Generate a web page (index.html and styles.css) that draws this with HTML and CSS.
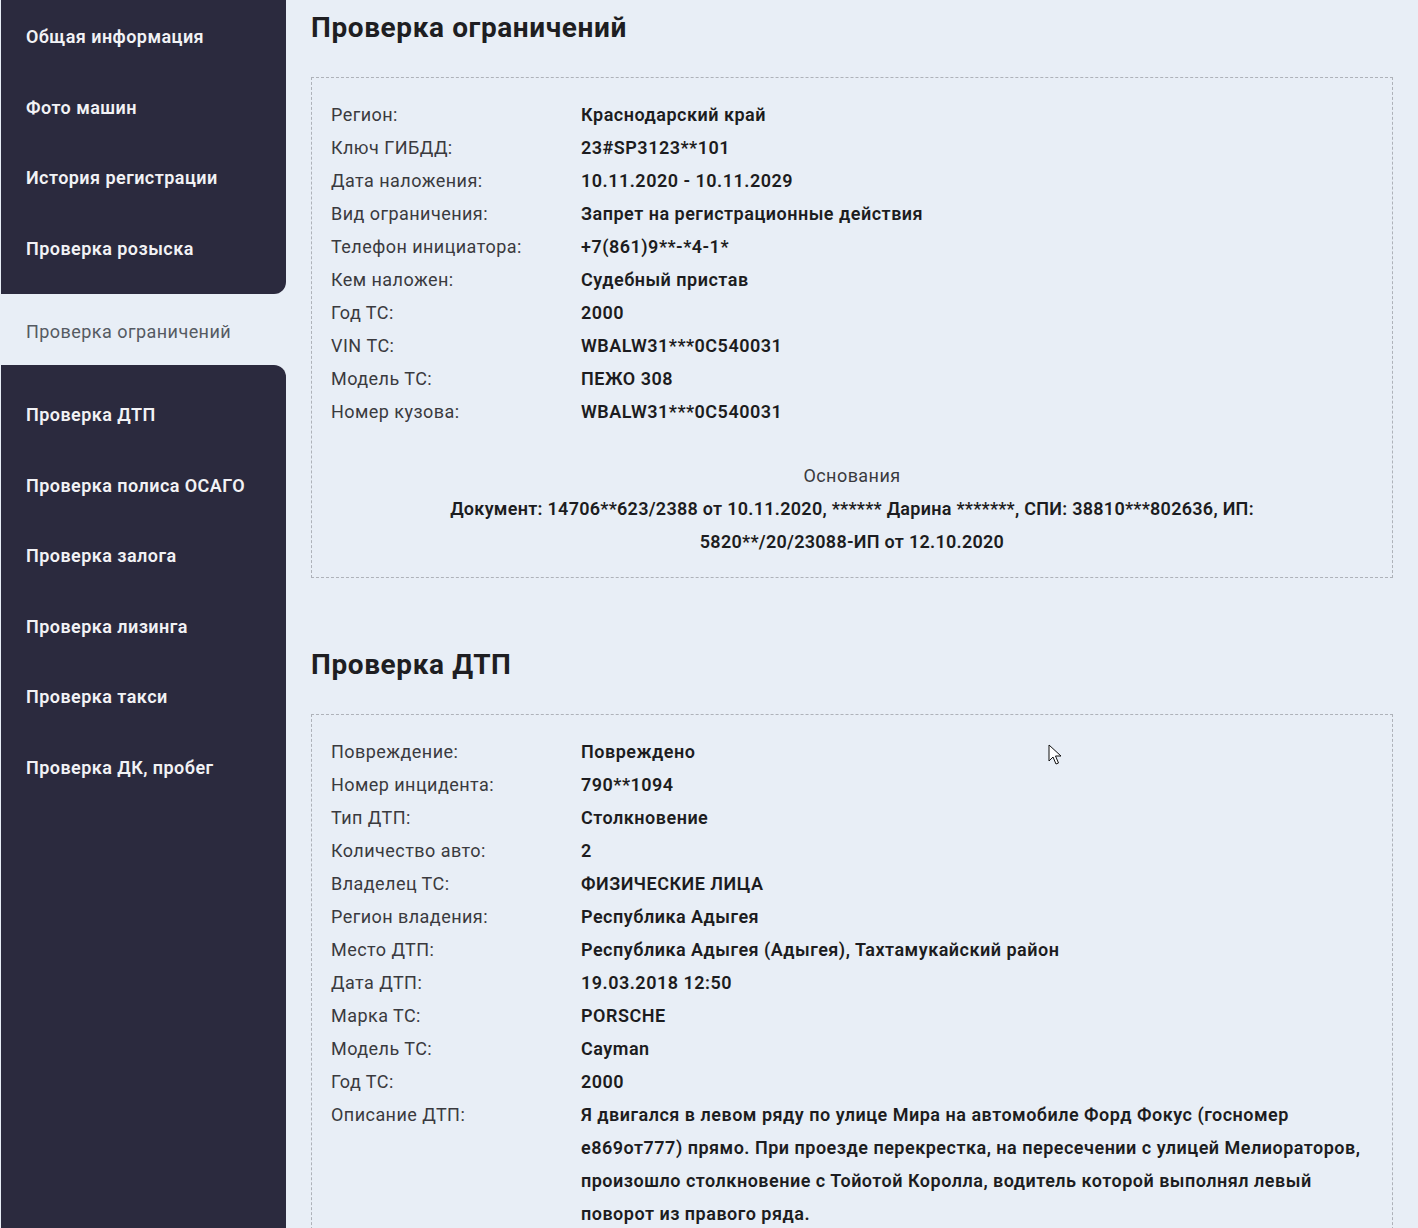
FILE: index.html
```html
<!DOCTYPE html>
<html lang="ru">
<head>
<meta charset="utf-8">
<title>Отчёт</title>
<link rel="stylesheet" href="styles.css">
</head>
<body>
<div class="page">
  <aside class="sidebar">
    <nav class="group group-top">
      <a class="item">Общая информация</a>
      <a class="item">Фото машин</a>
      <a class="item">История регистрации</a>
      <a class="item">Проверка розыска</a>
    </nav>
    <a class="item item-active">Проверка ограничений</a>
    <nav class="group group-bottom">
      <a class="item">Проверка ДТП</a>
      <a class="item">Проверка полиса ОСАГО</a>
      <a class="item">Проверка залога</a>
      <a class="item">Проверка лизинга</a>
      <a class="item">Проверка такси</a>
      <a class="item">Проверка ДК, пробег</a>
    </nav>
  </aside>
  <main class="content">
    <section class="section">
      <h2 class="title">Проверка ограничений</h2>
      <div class="box">
        <dl class="rows">
          <dt>Регион:</dt><dd>Краснодарский край</dd>
          <dt>Ключ ГИБДД:</dt><dd>23#SP3123**101</dd>
          <dt>Дата наложения:</dt><dd>10.11.2020 - 10.11.2029</dd>
          <dt>Вид ограничения:</dt><dd>Запрет на регистрационные действия</dd>
          <dt>Телефон инициатора:</dt><dd>+7(861)9**-*4-1*</dd>
          <dt>Кем наложен:</dt><dd>Судебный пристав</dd>
          <dt>Год ТС:</dt><dd>2000</dd>
          <dt>VIN ТС:</dt><dd>WBALW31***0C540031</dd>
          <dt>Модель ТС:</dt><dd>ПЕЖО 308</dd>
          <dt>Номер кузова:</dt><dd>WBALW31***0C540031</dd>
        </dl>
        <div class="basis">
          <div class="basis-title">Основания</div>
          <p class="basis-text">Документ: 14706**623/2388 от 10.11.2020, ****** Дарина *******, СПИ: 38810***802636, ИП: 5820**/20/23088-ИП от 12.10.2020</p>
        </div>
      </div>
    </section>
    <section class="section">
      <h2 class="title">Проверка ДТП</h2>
      <div class="box">
        <dl class="rows">
          <dt>Повреждение:</dt><dd>Повреждено</dd>
          <dt>Номер инцидента:</dt><dd>790**1094</dd>
          <dt>Тип ДТП:</dt><dd>Столкновение</dd>
          <dt>Количество авто:</dt><dd>2</dd>
          <dt>Владелец ТС:</dt><dd>ФИЗИЧЕСКИЕ ЛИЦА</dd>
          <dt>Регион владения:</dt><dd>Республика Адыгея</dd>
          <dt>Место ДТП:</dt><dd>Республика Адыгея (Адыгея), Тахтамукайский район</dd>
          <dt>Дата ДТП:</dt><dd>19.03.2018 12:50</dd>
          <dt>Марка ТС:</dt><dd>PORSCHE</dd>
          <dt>Модель ТС:</dt><dd>Cayman</dd>
          <dt>Год ТС:</dt><dd>2000</dd>
          <dt>Описание ДТП:</dt><dd>Я двигался в левом ряду по улице Мира на автомобиле Форд Фокус (госномер е869от777) прямо. При проезде перекрестка, на пересечении с улицей Мелиораторов, произошло столкновение с Тойотой Королла, водитель которой выполнял левый поворот из правого ряда.</dd>
        </dl>
      </div>
    </section>
  </main>
</div>
<svg class="cursor" width="14" height="22" viewBox="0 0 14 22" aria-hidden="true">
  <path d="M1 1 L1 17 L5 13 L8 20 L10.5 19 L7.5 12 L13 12 Z" fill="#fff" stroke="#111" stroke-width="1" stroke-linejoin="round"/>
</svg>
</body>
</html>
```
FILE: styles.css
```css
* { box-sizing: border-box; }
html, body { margin: 0; padding: 0; }
body {
  background: #e8eef6;
  font-family: Roboto, "Noto Sans", sans-serif;
  font-size: 18px;
  letter-spacing: 0.45px;
  color: #333;
}
.page {
  display: flex;
  min-height: 100vh;
  padding-left: 1px;
}
.sidebar {
  width: 285px;
  flex: none;
  display: flex;
  flex-direction: column;
}
.group {
  background: #2b2a3e;
  display: flex;
  flex-direction: column;
}
.group-top {
  padding-bottom: 12px;
  border-bottom-right-radius: 12px;
}
.group-bottom {
  flex: 1;
  padding-top: 12px;
  border-top-right-radius: 12px;
}
.item {
  display: block;
  height: 70.5px;
  line-height: 70.5px;
  padding: 2px 0 0 25px;
  color: #f2f2f5;
  font-weight: 600;
  text-decoration: none;
  white-space: nowrap;
}
.group-bottom .item { padding-top: 3px; }
.item-active {
  height: 71px;
  line-height: 71px;
  color: #555a62;
  font-weight: 400;
}
.content {
  flex: 1;
  padding: 10px 25px 0 25px;
  min-width: 0;
}
.section + .section { margin-top: 69px; }
.title {
  margin: 0;
  font-size: 28px;
  line-height: 36px;
  font-weight: 700;
  letter-spacing: 0.6px;
  color: #1e1e22;
}
.box {
  margin-top: 31px;
  border: 1px dashed #aeb2b9;
  padding: 20px 19px 19px 19px;
}
.rows {
  margin: 0;
  display: grid;
  grid-template-columns: 250px 1fr;
  line-height: 33px;
}
.rows dt {
  color: #3a3a3e;
  font-weight: 400;
}
.rows dd {
  margin: 0;
  color: #1c1c20;
  font-weight: 600;
  letter-spacing: 0.5px;
}
.basis {
  margin-top: 31px;
  text-align: center;
  line-height: 33px;
}
.basis-title {
  color: #3a3a3e;
  font-weight: 400;
}
.basis-text {
  margin: 0 auto;
  max-width: 880px;
  color: #1c1c20;
  font-weight: 600;
  letter-spacing: 0.28px;
}
.cursor {
  position: absolute;
  left: 1048px;
  top: 744px;
}
```
